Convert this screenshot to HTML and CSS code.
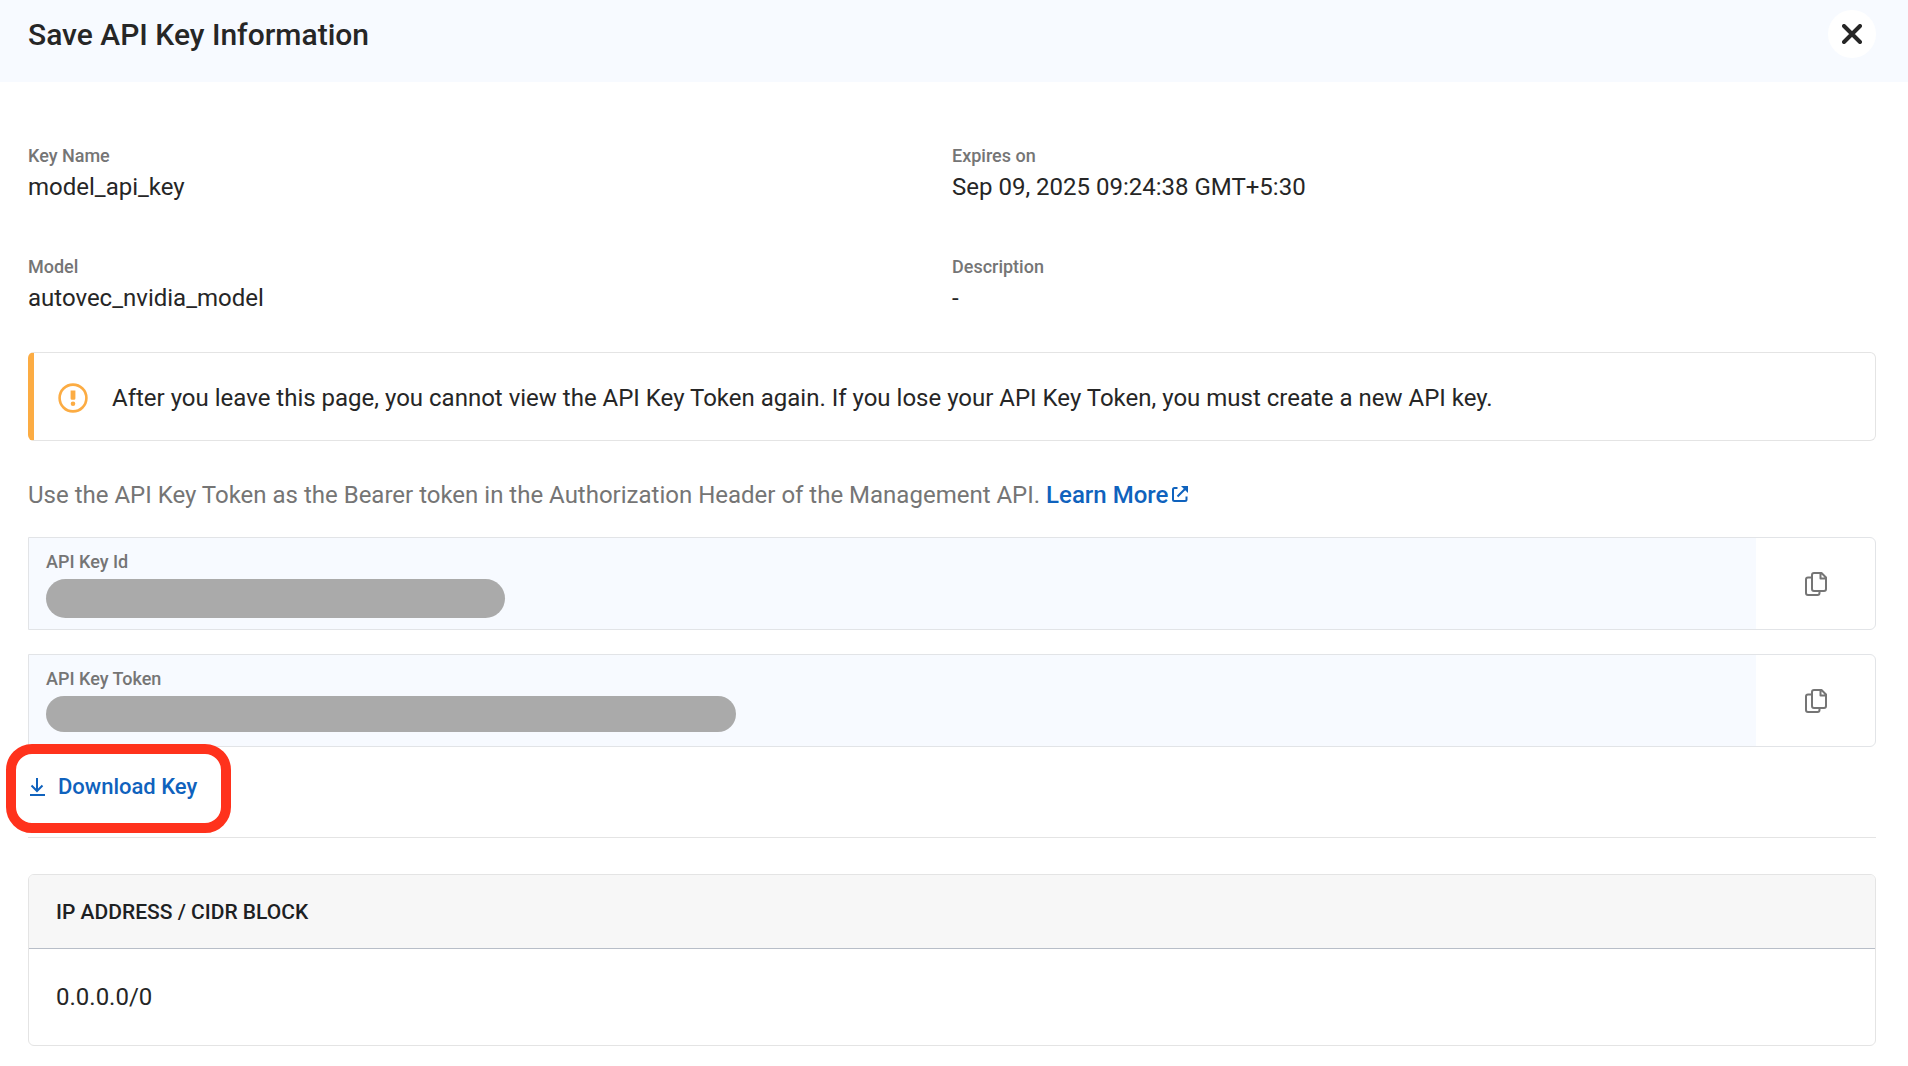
FILE: index.html
```html
<!DOCTYPE html>
<html lang="en">
<head>
<meta charset="utf-8">
<meta name="viewport" content="width=device-width, initial-scale=1">
<title>Save API Key Information</title>
<link rel="stylesheet" href="styles.css">
</head>
<body>
<header class="header">
  <h1 class="title">Save API Key Information</h1>
  <button class="close" type="button" aria-label="Close">
    <svg width="20" height="20" viewBox="0 0 20 20" fill="none" stroke="currentColor" stroke-width="4" stroke-linecap="round"><path d="M2 2 18 18M18 2 2 18"/></svg>
  </button>
</header>
<main class="content">
  <dl class="details">
    <div class="detail"><dt class="label">Key Name</dt><dd class="value">model_api_key</dd></div>
    <div class="detail"><dt class="label">Expires on</dt><dd class="value">Sep 09, 2025 09:24:38 GMT+5:30</dd></div>
    <div class="detail"><dt class="label">Model</dt><dd class="value">autovec_nvidia_model</dd></div>
    <div class="detail"><dt class="label">Description</dt><dd class="value">-</dd></div>
  </dl>

  <div class="alert" role="alert">
    <svg width="30" height="30" viewBox="0 0 30 30" fill="none" stroke="currentColor"><circle cx="15" cy="15" r="13.4" stroke-width="2.6"/><path d="M12.6 7.6h4.8v7.8q0 1.4-1.4 1.4h-2q-1.4 0-1.4-1.4z" fill="currentColor" stroke="none"/><circle cx="15" cy="20.800" r="2.300" fill="currentColor" stroke="none"/></svg>
    <p class="alert-text">After you leave this page, you cannot view the API Key Token again. If you lose your API Key Token, you must create a new API key.</p>
  </div>

  <p class="hint">Use the API Key Token as the Bearer token in the Authorization Header of the Management API. <a class="link" href="#learn-more">Learn More<svg class="external" width="18" height="18" viewBox="0 0 18 18" fill="none" stroke="currentColor" stroke-width="2"><path d="M6.500 3H3.500Q2 3 2 4.500V14.500Q2 16 3.500 16H14Q15.500 16 15.500 14.500V11.500M6.500 11.500 15 3"/><path d="M10 1H17V8z" fill="currentColor" stroke="none"/></svg></a></p>

  <div class="keys">
    <section class="key">
      <div class="key-body">
        <h2 class="label">API Key Id</h2>
        <div class="redacted redacted-id"></div>
      </div>
      <button class="copy" type="button" aria-label="Copy API Key Id">
        <svg width="22" height="24" viewBox="0 0 22 24" fill="none" stroke="currentColor" stroke-width="2" stroke-linejoin="round"><path d="M7 5.500H3Q1 5.500 1 7.500V21Q1 23 3 23H12.500Q14.500 23 14.500 21V19"/><path d="M9 1H16.500L21 5.500V17Q21 19 19 19H9Q7 19 7 17V3Q7 1 9 1ZM15.500 1V6.500H21"/></svg>
      </button>
    </section>
    <section class="key">
      <div class="key-body">
        <h2 class="label">API Key Token</h2>
        <div class="redacted redacted-token"></div>
      </div>
      <button class="copy" type="button" aria-label="Copy API Key Token">
        <svg width="22" height="24" viewBox="0 0 22 24" fill="none" stroke="currentColor" stroke-width="2" stroke-linejoin="round"><path d="M7 5.500H3Q1 5.500 1 7.500V21Q1 23 3 23H12.500Q14.500 23 14.500 21V19"/><path d="M9 1H16.500L21 5.500V17Q21 19 19 19H9Q7 19 7 17V3Q7 1 9 1ZM15.500 1V6.500H21"/></svg>
      </button>
    </section>
  </div>

  <div class="actions">
    <button class="download" type="button">
      <svg width="18" height="20" viewBox="0 0 18 20" fill="none" stroke="currentColor" stroke-width="2"><path d="M9 1V14M3.500 8.500 9 14 14.500 8.500M2 18H17"/></svg>
      Download Key
    </button>
  </div>

  <table class="addresses">
    <thead><tr><th scope="col">IP ADDRESS / CIDR BLOCK</th></tr></thead>
    <tbody><tr><td>0.0.0.0/0</td></tr></tbody>
  </table>
</main>
</body>
</html>
```
FILE: styles.css
```css
* {
  box-sizing: border-box;
}

body,
h1,
h2,
p,
dl,
dd {
  margin: 0;
}

body {
  background: #fff;
  color: #262626;
  font: 400 24px/32px Roboto, sans-serif;
}

button {
  padding: 0;
  border: 0;
  background: none;
  font: inherit;
  cursor: pointer;
}

svg {
  display: block;
  flex: none;
}

.header {
  display: flex;
  justify-content: space-between;
  align-items: flex-start;
  padding: 10px 32px 22px 28px;
  background: #f7faff;
}

.title {
  font-size: 30px;
  font-weight: 500;
  line-height: 50px;
}

.close {
  display: grid;
  place-items: center;
  width: 48px;
  height: 48px;
  border-radius: 50%;
  background: #fff;
  color: #262626;
}

.content {
  padding: 62px 32px 20px 28px;
}

.details {
  display: grid;
  grid-template-columns: 1fr 1fr;
  row-gap: 52px;
}

.label {
  color: #757575;
  font-size: 18px;
  font-weight: 500;
  line-height: 24px;
}

.value {
  margin-top: 3px;
}

.alert {
  display: flex;
  align-items: center;
  gap: 24px;
  margin-top: 38px;
  padding: 29px 24px 26px;
  border: 1px solid #e4e4e4;
  border-left: 6px solid #fcac43;
  border-radius: 6px;
  color: #fcac43;
}

.alert-text {
  color: #262626;
}

.hint {
  margin-top: 38px;
  color: #757575;
}

.link {
  color: #0f62bd;
  font-weight: 500;
  text-decoration: none;
}

.external {
  display: inline-block;
  margin-left: 3px;
}

.keys {
  display: grid;
  gap: 24px;
  margin-top: 26px;
}

.key {
  display: flex;
  height: 93px;
  border: 1px solid #e2e4e7;
  border-radius: 0 6px 6px 0;
}

.key-body {
  flex: 1;
  padding: 12px 17px;
  background: #f7faff;
}

.redacted {
  max-width: 100%;
  margin-top: 5px;
  border-radius: 20px;
  background: #aaa;
}

.redacted-id {
  width: 459px;
  height: 39px;
}

.redacted-token {
  width: 690px;
  height: 36px;
}

.copy {
  display: grid;
  place-items: center;
  width: 119px;
  color: #757575;
}

.actions {
  padding: 24px 0 34px;
  border-bottom: 1px solid #e4e4e4;
}

.download {
  position: relative;
  display: flex;
  align-items: center;
  gap: 12px;
  color: #0f62bd;
  font-size: 22px;
  font-weight: 500;
}

/* Callout ring around the download action */
.download::after {
  content: "";
  position: absolute;
  inset: -27px -34px -30px -22px;
  border: 10px solid #ff321c;
  border-radius: 26px;
  pointer-events: none;
}

.addresses {
  width: 100%;
  margin-top: 36px;
  border: 1px solid #e4e4e4;
  border-radius: 6px;
  border-spacing: 0;
  overflow: hidden;
  text-align: left;
}

.addresses th {
  padding: 21px 27px 20px;
  border-bottom: 1px solid #b8bec8;
  background: #f7f7f7;
  color: #1d2123;
  font-size: 21px;
  font-weight: 500;
}

.addresses td {
  padding: 32px 27px;
}
```
